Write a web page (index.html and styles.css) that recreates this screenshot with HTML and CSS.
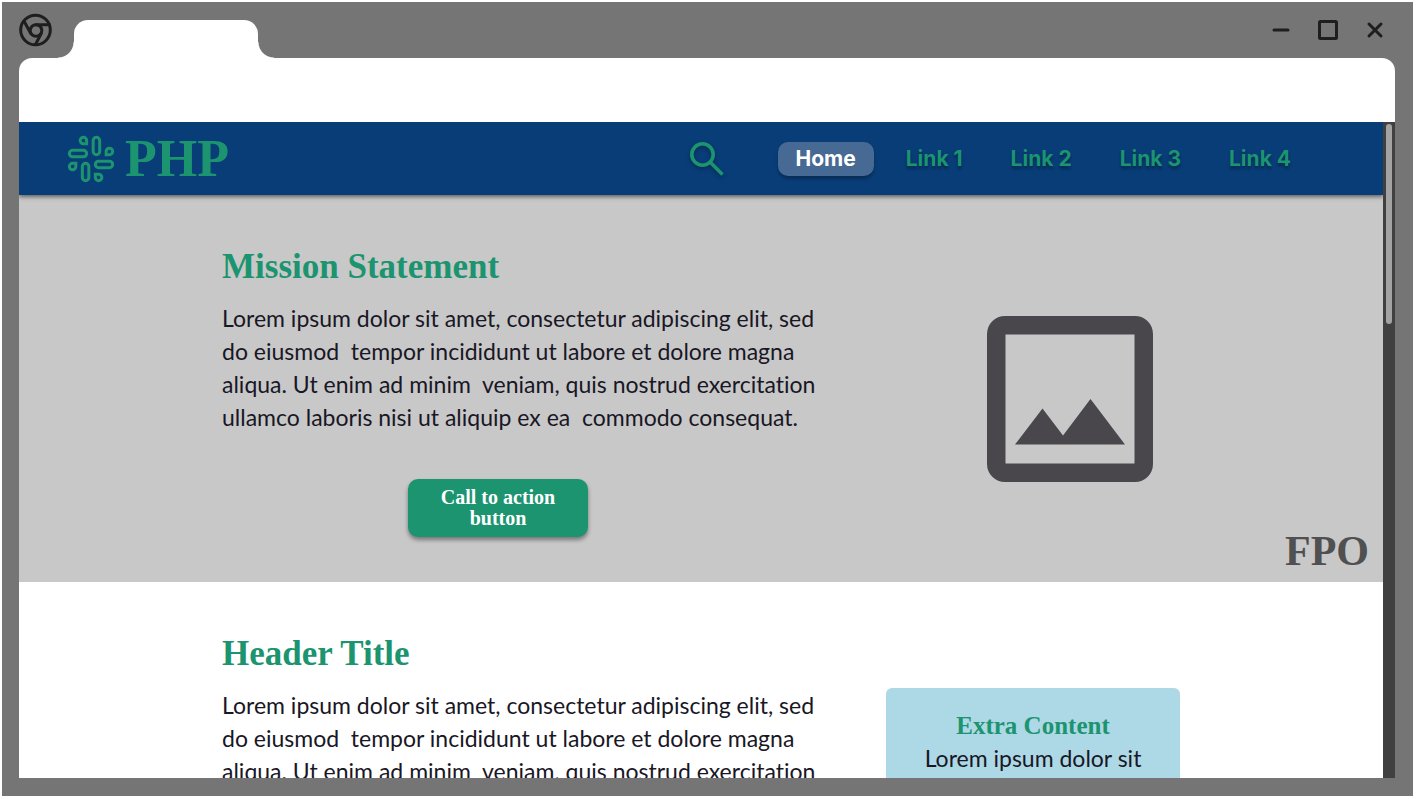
FILE: index.html
```html
<!DOCTYPE html>
<html lang="en">
<head>
<meta charset="utf-8">
<title>PHP</title>
<meta name="viewport" content="width=device-width, initial-scale=1">
<link rel="stylesheet" href="styles.css">
</head>
<body>
<div class="window">
  <div class="titlebar">
    <svg class="browser-icon" viewBox="0 0 34 34" aria-hidden="true">
      <circle cx="16.500" cy="17" r="14.800"/>
      <circle cx="17" cy="17.500" r="5.800"/>
      <path d="M17 11.700h13.500M11.800 20.500L5.500 9M22.200 20.500L16.500 31.500"/>
    </svg>
    <div class="tab"></div>
    <div class="controls">
      <button class="control" type="button" aria-label="Minimize"><svg viewBox="0 0 24 24"><path d="M5 12h14"/></svg></button>
      <button class="control" type="button" aria-label="Maximize"><svg viewBox="0 0 24 24"><rect x="3.500" y="3.500" width="17" height="17" rx="1"/></svg></button>
      <button class="control" type="button" aria-label="Close"><svg viewBox="0 0 24 24"><path d="M6 6l12 12M18 6L6 18"/></svg></button>
    </div>
  </div>
  <div class="toolbar"></div>
  <div class="viewport">
    <div class="page">
      <header class="navbar">
        <a class="brand" href="#">
          <svg class="brand-icon" viewBox="0 0 24 24" aria-hidden="true">
            <rect width="3" height="8" x="13" y="2" rx="1.5"/><path d="M19 8.500V10h1.500A1.500 1.500 0 1 0 19 8.500"/>
            <rect width="3" height="8" x="8" y="14" rx="1.5"/><path d="M5 15.500V14H3.500A1.500 1.500 0 1 0 5 15.500"/>
            <rect width="8" height="3" x="14" y="13" rx="1.5"/><path d="M15.500 19H14v1.500a1.500 1.500 0 1 0 1.500-1.500"/>
            <rect width="8" height="3" x="2" y="8" rx="1.5"/><path d="M8.500 5H10V3.500A1.500 1.500 0 1 0 8.500 5"/>
          </svg>
          <span>PHP</span>
        </a>
        <button class="search" type="button" aria-label="Search">
          <svg viewBox="0 0 34 34"><circle cx="12.500" cy="12.500" r="10.700"/><path d="M20 20l12.500 12.500"/></svg>
        </button>
        <nav class="links">
          <a class="link link-active" href="#">Home</a>
          <a class="link" href="#">Link 1</a>
          <a class="link" href="#">Link 2</a>
          <a class="link" href="#">Link 3</a>
          <a class="link" href="#">Link 4</a>
        </nav>
      </header>
      <main>
        <section class="hero">
          <div class="columns">
            <div class="copy">
              <h1 class="title">Mission Statement</h1>
              <p class="text">Lorem ipsum dolor sit amet, consectetur adipiscing elit, sed<br>do eiusmod&nbsp; tempor incididunt ut labore et dolore magna<br>aliqua. Ut enim ad minim&nbsp; veniam, quis nostrud exercitation<br>ullamco laboris nisi ut aliquip ex ea&nbsp; commodo consequat.</p>
              <button class="cta" type="button">Call to action button</button>
            </div>
            <div class="media">
              <svg viewBox="0 0 166 166" role="img" aria-label="Image placeholder">
                <path fill-rule="evenodd" d="M18 0H148A18 18 0 0 1 166 18V148A18 18 0 0 1 148 166H18A18 18 0 0 1 0 148V18A18 18 0 0 1 18 0ZM18.500 18.500V147.500H147.500V18.500Z"/>
                <path d="M28 128.500L55.500 92.500L76 119.500L103.500 83L138 128.500Z"/>
              </svg>
            </div>
          </div>
          <span class="fpo">FPO</span>
        </section>
        <section class="article">
          <div class="columns">
            <div class="copy">
              <h2 class="title">Header Title</h2>
              <p class="text">Lorem ipsum dolor sit amet, consectetur adipiscing elit, sed<br>do eiusmod&nbsp; tempor incididunt ut labore et dolore magna<br>aliqua. Ut enim ad minim&nbsp; veniam, quis nostrud exercitation</p>
            </div>
            <aside class="card">
              <h3 class="card-title">Extra Content</h3>
              <p class="text">Lorem ipsum dolor sit</p>
            </aside>
          </div>
        </section>
      </main>
    </div>
    <div class="track"><div class="thumb"></div></div>
  </div>
</div>
</body>
</html>
```
FILE: styles.css
```css
* { box-sizing: border-box; }

body {
  margin: 0;
  padding: 2px 3px 3px 2px;
  height: 100vh;
  background: #fff;
  font-family: Lato, sans-serif;
  color: #191725;
}

h1, h2, h3, p { margin: 0; }

button {
  border: 0;
  padding: 0;
  background: none;
  font: inherit;
  cursor: pointer;
}

svg { display: block; }

/* Browser frame */
.window {
  display: flex;
  flex-direction: column;
  height: 100%;
  padding: 0 18px 18px 17px;
  background: #757575;
  overflow: hidden;
}

.titlebar {
  display: flex;
  flex: none;
  height: 56px;
  align-items: flex-end;
}

.browser-icon {
  width: 34px;
  height: 34px;
  margin: 0 21px 11px 0;
  fill: none;
  stroke: #1e1e1e;
  stroke-width: 3;
  stroke-linecap: round;
}

.tab {
  position: relative;
  width: 184px;
  height: 38px;
  border-radius: 14px 14px 0 0;
  background: #fff;
}

.tab::before,
.tab::after {
  content: "";
  position: absolute;
  bottom: 0;
  width: 16px;
  height: 16px;
}

.tab::before {
  right: 100%;
  background: radial-gradient(circle at 0 0, transparent 15px, #fff 16px);
}

.tab::after {
  left: 100%;
  background: radial-gradient(circle at 100% 0, transparent 15px, #fff 16px);
}

.controls {
  display: flex;
  gap: 23px;
  margin: 0 8px 16px auto;
}

.control {
  width: 24px;
  height: 24px;
  fill: none;
  stroke: #1e1e1e;
  stroke-width: 3;
  stroke-linecap: round;
}

.toolbar {
  flex: none;
  height: 64px;
  border-radius: 13px 13px 0 0;
  background: #fff;
}

.viewport {
  display: flex;
  flex: 1;
  min-height: 0;
}

.page {
  flex: 1;
  min-width: 0;
  background: #fff;
  overflow: hidden;
}

.track {
  width: 12px;
  padding: 2px 3px;
  background: #404040;
}

.thumb {
  height: 200px;
  border-radius: 3px;
  background: #a3a3a3;
}

/* Navigation */
.navbar {
  position: relative;
  display: flex;
  align-items: center;
  height: 73px;
  padding: 0 76px 0 46px;
  background: #083d77;
  box-shadow: 0 2px 4px rgba(0, 0, 0, 0.5);
}

.brand {
  display: flex;
  align-items: center;
  gap: 8px;
  color: #1b946f;
  font: bold 52px/60px "Liberation Serif", serif;
  text-decoration: none;
}

.brand-icon {
  width: 52px;
  height: 52px;
  fill: none;
  stroke: currentColor;
  stroke-width: 1.4;
}

.search {
  width: 34px;
  height: 34px;
  margin: 0 54px 0 auto;
  fill: none;
  stroke: #1b946f;
  stroke-width: 3.6;
  filter: drop-shadow(0 2px 2px rgba(0, 0, 0, 0.3));
}

.links {
  display: flex;
  align-items: center;
  gap: 16px;
}

.link {
  padding: 5px 16px;
  border-radius: 10px;
  color: #1b946f;
  font: bold 21px/24px Inter, sans-serif;
  text-decoration: none;
  text-shadow: 0 3px 3px rgba(0, 0, 0, 0.3);
}

.link-active {
  padding: 5px 18px;
  background: #476a94;
  color: #fff;
  text-shadow: none;
  box-shadow: 0 3px 3px rgba(0, 0, 0, 0.25);
}

/* Content */
.columns {
  display: flex;
  justify-content: space-between;
  max-width: 958px;
  margin: 0 auto;
}

.copy {
  display: flex;
  flex-direction: column;
}

.hero {
  display: flex;
  flex-direction: column;
  padding-top: 52px;
  background: #c8c8c8;
}

.hero .columns { width: 100%; }

.title {
  margin-bottom: 15px;
  color: #1b946f;
  font: bold 35px/40px "Liberation Serif", serif;
}

.text {
  font-size: 23px;
  line-height: 33px;
  font-variant-ligatures: none;
}

.cta {
  align-self: flex-start;
  width: 180px;
  margin: 45px 0 0 186px;
  padding: 8px 30px;
  border-radius: 10px;
  background: #1b946f;
  color: #fff;
  font: bold 20px/21px "Liberation Serif", serif;
  box-shadow: 0 3px 4px rgba(0, 0, 0, 0.4);
}

.media {
  width: 166px;
  margin: 69px 27px 0 0;
  fill: #49474c;
}

.fpo {
  align-self: flex-end;
  margin: -10px 14px 7px;
  color: #505050;
  font: bold 42px/48px "Liberation Serif", serif;
}

.article { padding-top: 52px; }

.card {
  width: 294px;
  min-height: 200px;
  margin-top: 54px;
  padding: 22px 24px;
  border-radius: 6px;
  background: #add8e6;
  text-align: center;
}

.card-title {
  color: #1b946f;
  font: bold 25px/32px "Liberation Serif", serif;
}
```
